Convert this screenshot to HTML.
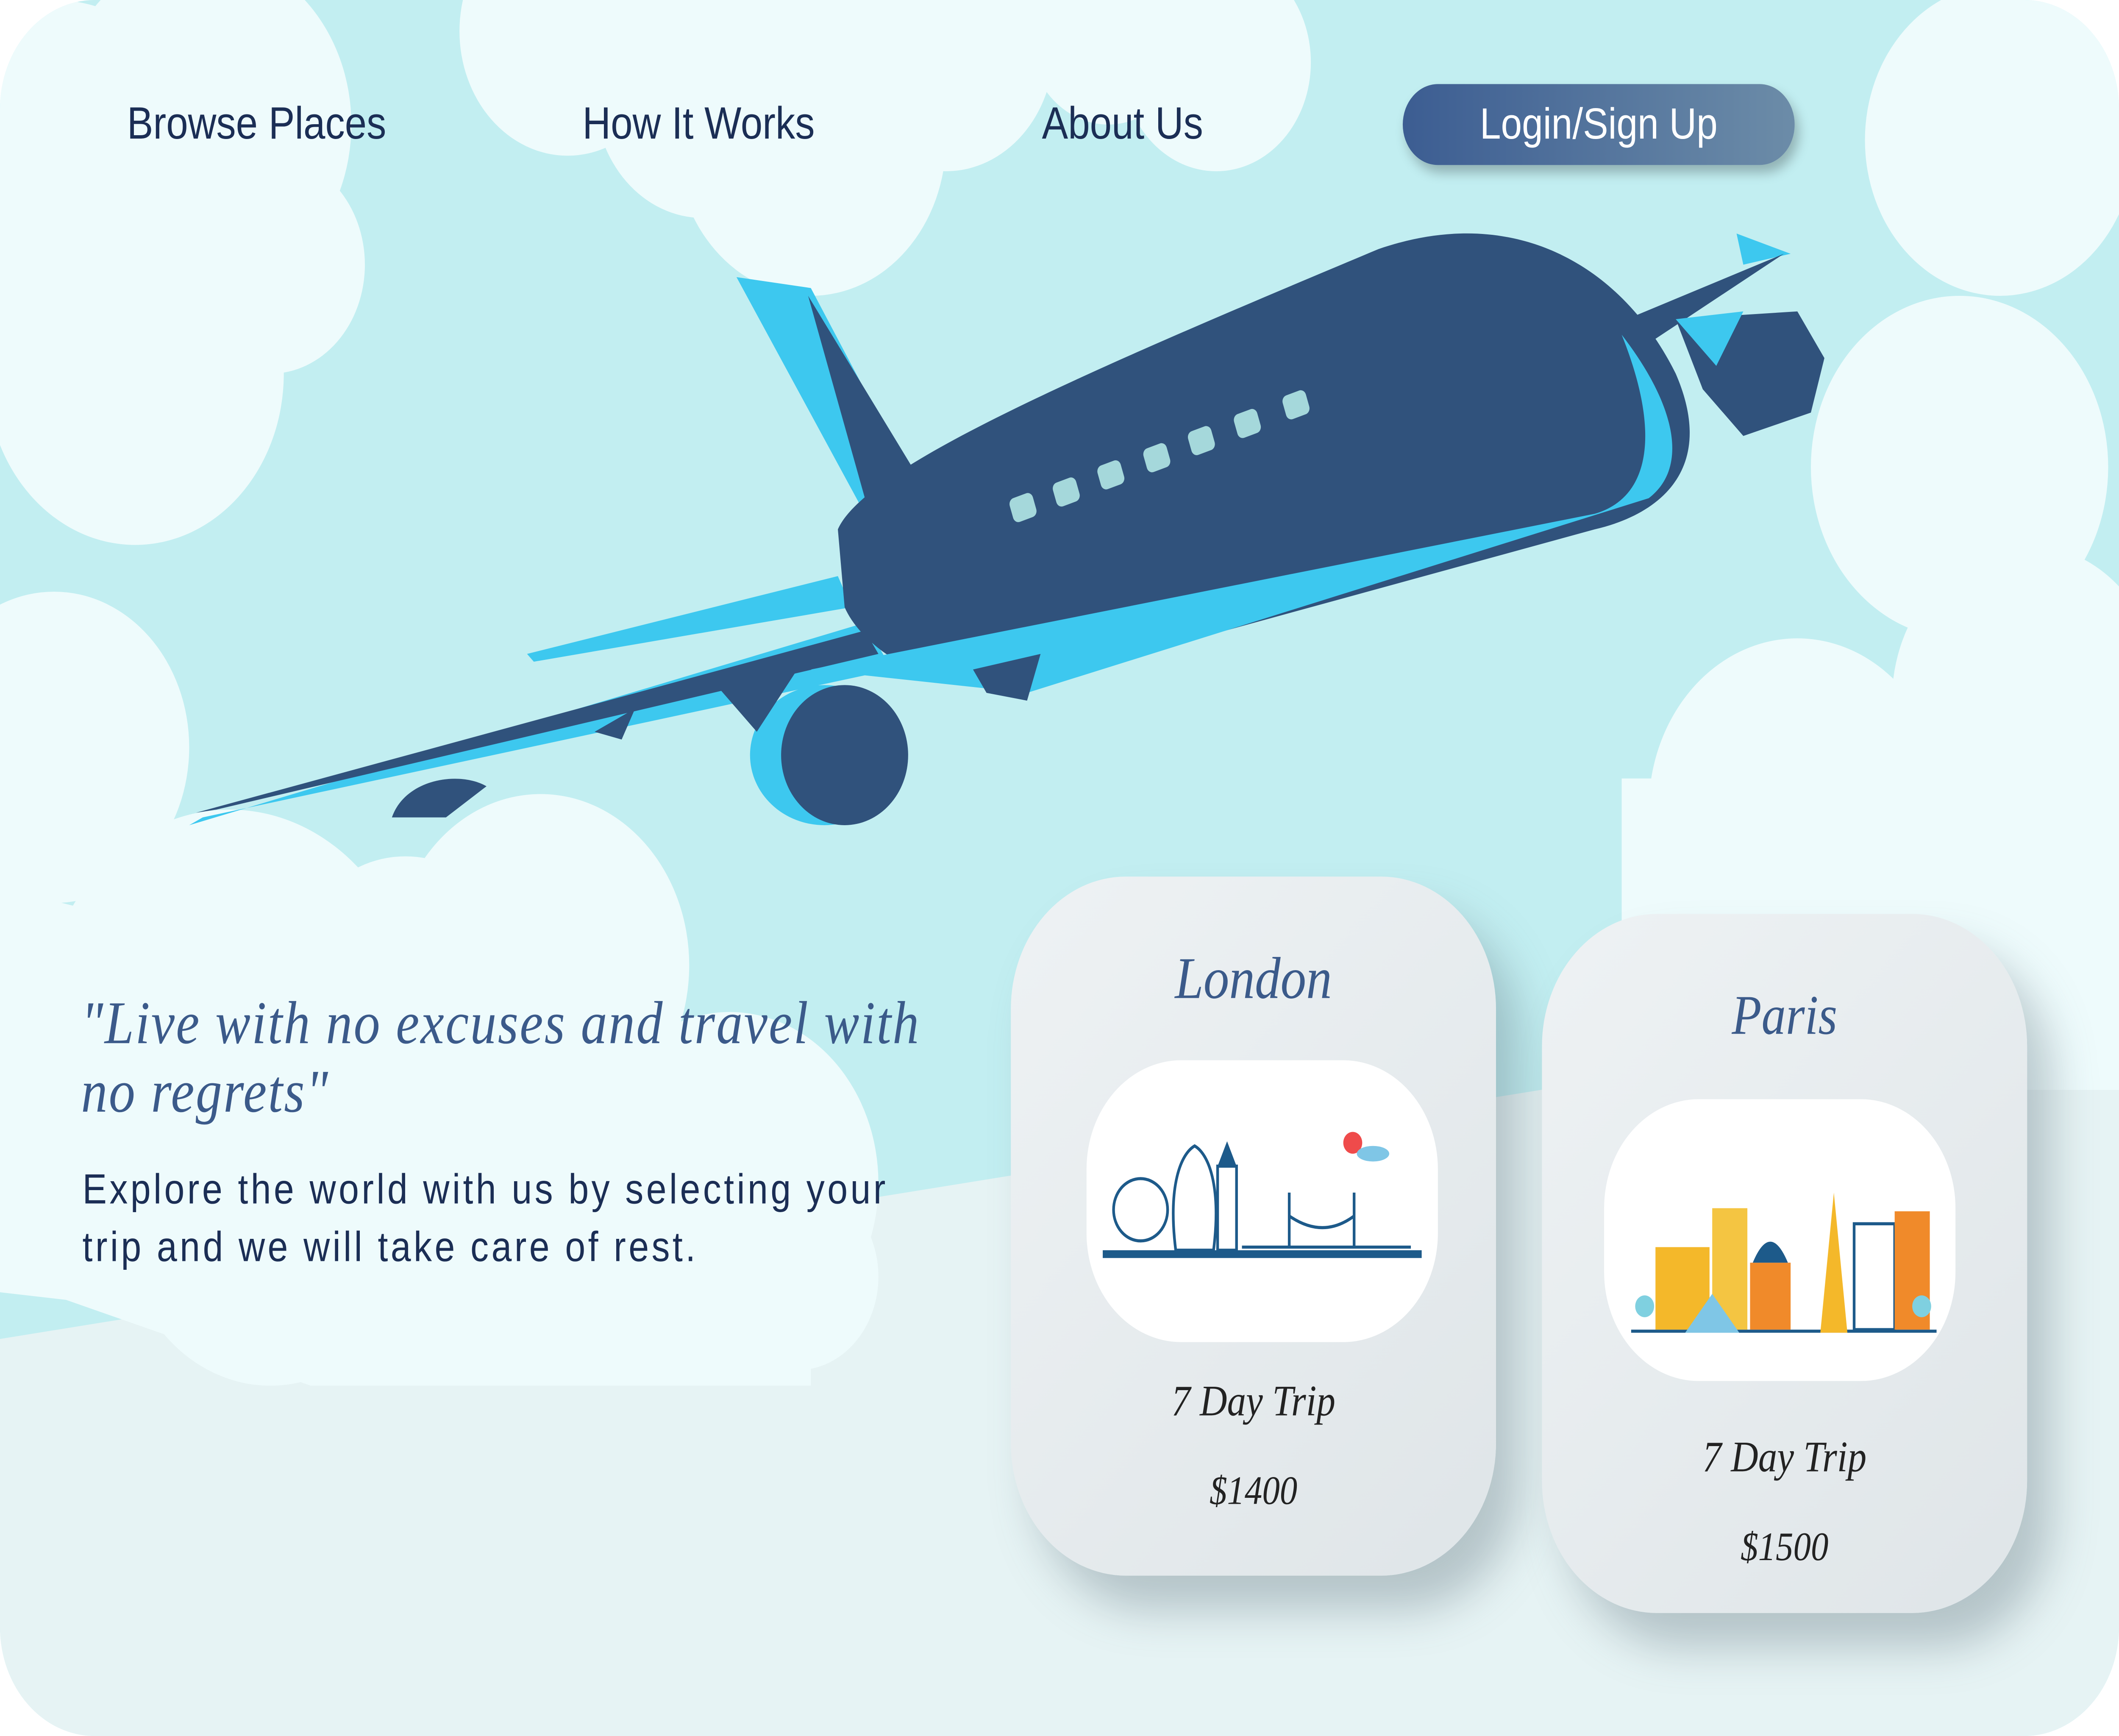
<!DOCTYPE html>
<html><head><meta charset="utf-8"><style>
html,body{margin:0;padding:0;background:#fff;overflow:hidden;width:100%;height:100%}
#w{position:absolute;left:0;top:0;width:1568px;height:1115px;transform:scale(3.6735);transform-origin:0 0;border-radius:70px;overflow:hidden;background:#c2eef1;font-family:"Liberation Sans",sans-serif}
.a{position:absolute}
.nav{position:absolute;top:64px;font-size:29px;color:#1b2e55}
.card{position:absolute;width:359px;height:449px;border-radius:85px;background:linear-gradient(135deg,#eef2f4,#dfe5e8);box-shadow:18px 22px 30px rgba(90,110,120,.35)}
.inner{position:absolute;left:56px;width:260px;height:181px;border-radius:70px;background:#fff}
.cur{font-family:"Liberation Serif",serif;font-style:italic;position:absolute;width:100%;text-align:center}
</style></head><body><div id="w">
<svg class="a" style="left:0;top:0" width="1568" height="1115" viewBox="0 0 1568 1115">
<path d="M0 860 L1568 640 L1568 1115 L0 1115Z" fill="#e6f3f4"/>
<g fill="#eefbfc">
<circle cx="100" cy="240" r="110"/><circle cx="150" cy="80" r="110"/><circle cx="200" cy="170" r="70"/><circle cx="40" cy="120" r="120"/>
<circle cx="420" cy="20" r="80"/><circle cx="520" cy="60" r="80"/><circle cx="600" cy="90" r="100"/><circle cx="700" cy="30" r="80"/><circle cx="900" cy="40" r="70"/><circle cx="820" cy="20" r="60"/>
<circle cx="1480" cy="90" r="100"/><circle cx="1450" cy="300" r="110"/><circle cx="1330" cy="520" r="110"/><circle cx="1500" cy="450" r="100"/><rect x="1200" y="500" width="368" height="200"/>
<circle cx="40" cy="480" r="100"/><circle cx="170" cy="660" r="140"/><circle cx="400" cy="620" r="110"/><circle cx="300" cy="640" r="90"/><circle cx="540" cy="760" r="110"/><circle cx="590" cy="820" r="60"/><circle cx="200" cy="780" r="110"/>
<path d="M0 570 L600 700 L600 890 L0 830Z"/>
</g>
<path d="M0 820 L230 890 L600 890 L600 850 L0 790Z" fill="#eefbfc"/>
<path d="M545 178 L600 185 L670 300 L640 330Z" fill="#3dc8ef"/>
<path d="M598 190 L675 300 L640 320Z" fill="#30527c"/>
<path d="M1285 150 L1325 163 L1290 170Z" fill="#3dc8ef"/>
<path d="M1190 210 L1320 163 L1200 232Z" fill="#30527c"/>
<path d="M1240 205 L1330 200 L1350 230 L1340 265 L1290 280 L1260 250Z" fill="#30527c"/>
<path d="M1240 205 L1290 200 L1270 235Z" fill="#3dc8ef"/>
<path d="M390 420 L620 370 L630 390 L395 425Z" fill="#3dc8ef"/>
<path d="M140 530 L640 400 L660 430 L150 525Z" fill="#3dc8ef"/>
<path d="M145 522 L640 405 L650 420 L160 520Z" fill="#30527c"/>
<path d="M620 340 C640 300 800 240 1020 160 C1120 130 1200 170 1240 240 C1270 300 1230 330 1180 340 L760 440 C700 450 640 420 625 390Z" fill="#30527c"/>
<path d="M600 430 L1180 330 C1220 320 1230 280 1200 215 C1240 260 1250 300 1220 320 L760 445 Z" fill="#3dc8ef"/>
<path d="M720 430 L770 420 L760 450 L730 445Z" fill="#30527c"/>
<ellipse cx="610" cy="485" rx="55" ry="45" fill="#3dc8ef"/><ellipse cx="625" cy="485" rx="47" ry="45" fill="#30527c"/>
<path d="M530 440 L590 430 L560 470Z" fill="#30527c"/>
<path d="M290 525 C300 500 340 495 360 505 L330 525Z" fill="#30527c"/>
<path d="M440 470 L470 455 L460 475Z" fill="#30527c"/>
<g fill="#a5d8db"><rect x="748" y="318" width="18" height="16" rx="4" transform="rotate(-18 757 326)"/><rect x="780" y="308" width="18" height="16" rx="4" transform="rotate(-18 789 316)"/><rect x="813" y="297" width="18" height="16" rx="4" transform="rotate(-18 822 305)"/><rect x="847" y="286" width="18" height="16" rx="4" transform="rotate(-18 856 294)"/><rect x="880" y="275" width="18" height="16" rx="4" transform="rotate(-18 889 283)"/><rect x="914" y="264" width="18" height="16" rx="4" transform="rotate(-18 923 272)"/><rect x="950" y="252" width="18" height="16" rx="4" transform="rotate(-18 959 260)"/></g>
</svg>
<div class="nav" style="left:94px">Browse Places</div>
<div class="nav" style="left:431px">How It Works</div>
<div class="nav" style="left:771px">About Us</div>
<div class="a" style="left:1038px;top:54px;width:290px;height:52px;border-radius:26px;background:linear-gradient(90deg,#3c5d92,#6c8ca8);box-shadow:3px 5px 8px rgba(0,0,0,.25);color:#fff;font-size:28px;text-align:center;line-height:52px">Login/Sign Up</div>
<div class="a" style="left:60px;top:636px;width:650px;font-family:'Liberation Serif',serif;font-style:italic;font-size:39px;line-height:44px;color:#3b5a8a;letter-spacing:1px">"Live with no excuses and travel with no regrets"</div>
<div class="a" style="left:61px;top:746px;width:650px;font-size:27px;line-height:37px;color:#1b2e55;letter-spacing:2px">Explore the world with us by selecting your trip and we will take care of rest.</div>
<div class="card" style="left:748px;top:563px">
<div class="cur" style="top:44px;font-size:38px;color:#3b5a8a">London</div>
<div class="inner" style="top:118px">
<svg width="260" height="181" viewBox="0 0 260 181"><rect x="12" y="122" width="236" height="5" fill="#1d5a8a"/>
<circle cx="40" cy="96" r="20" fill="none" stroke="#1d5a8a" stroke-width="2"/><path d="M66 122 C60 80 70 60 80 55 C90 60 100 80 94 122Z" fill="none" stroke="#1d5a8a" stroke-width="2"/>
<rect x="97" y="68" width="14" height="54" fill="#fff" stroke="#1d5a8a" stroke-width="2"/><path d="M104 52 L97 68 L111 68Z" fill="#1d5a8a"/>
<path d="M115 120 L240 120 M150 120 L150 85 M198 120 L198 85 M150 100 Q175 115 198 100" stroke="#1d5a8a" stroke-width="2" fill="none"/>
<circle cx="197" cy="53" r="7" fill="#ef4b4b"/><ellipse cx="212" cy="60" rx="12" ry="5" fill="#7fc6e6"/></svg></div>
<div class="cur" style="top:322px;font-size:28px;color:#222">7 Day Trip</div>
<div class="cur" style="top:380px;font-size:26px;color:#222">$1400</div>
</div>
<div class="card" style="left:1141px;top:587px">
<div class="cur" style="top:44px;font-size:36px;color:#3b5a8a">Paris</div>
<div class="inner" style="left:46px;top:119px">
<svg width="260" height="181" viewBox="0 0 260 181"><rect x="20" y="148" width="226" height="2" fill="#1d5a8a"/>
<rect x="38" y="95" width="40" height="53" fill="#f4b82a"/><rect x="80" y="70" width="26" height="78" fill="#f4c542"/><rect x="108" y="105" width="30" height="43" fill="#f08a2a"/><path d="M110 105 Q123 78 136 105Z" fill="#1d5a8a"/>
<path d="M160 150 L170 60 L180 150Z" fill="#f4b82a"/><rect x="185" y="80" width="30" height="68" fill="#fff" stroke="#1d5a8a" stroke-width="2"/><rect x="215" y="72" width="26" height="76" fill="#f08a2a"/>
<path d="M60 150 L80 125 L100 150Z" fill="#7fc6e6"/><circle cx="30" cy="133" r="7" fill="#7fd0e0"/><circle cx="235" cy="133" r="7" fill="#7fd0e0"/></svg></div>
<div class="cur" style="top:334px;font-size:28px;color:#222">7 Day Trip</div>
<div class="cur" style="top:392px;font-size:26px;color:#222">$1500</div>
</div>
</div>
<script>
(function(){var w=document.getElementById('w');var sx=window.innerWidth/1568,sy=window.innerHeight/1115;if(sx>0&&sy>0){w.style.transform='scale('+sx+','+sy+')';}})();
</script>
</body></html>
